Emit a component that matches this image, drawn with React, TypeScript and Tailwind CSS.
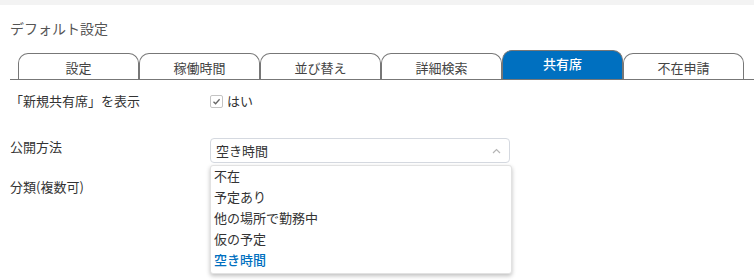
import * as React from "react";

const TABS = ["設定", "稼働時間", "並び替え", "詳細検索", "共有席", "不在申請"];
const ACTIVE = 4;
const OPTIONS = ["不在", "予定あり", "他の場所で勤務中", "仮の予定", "空き時間"];

export default function App() {
  return (
    <div className="relative h-[280px] w-[754px] overflow-hidden bg-white font-['Noto_Sans_CJK_JP','Noto_Sans',sans-serif] text-[13px] text-[#333]">
      <div className="h-[5px] bg-[#f3f3f3]" />

      <h1 className="pl-[10px] pt-[13px] text-[14px] leading-[20px] text-[#555]">
        デフォルト設定
      </h1>

      {/* tabs */}
      <div className="ml-[10px] mt-[12px] flex items-end border-b border-[#777] pl-[8px]">
        {TABS.map((t, i) =>
          i === ACTIVE ? (
            <div
              key={t}
              className="flex h-[29px] w-[121px] items-start justify-center rounded-t-[10px] border border-b-0 border-[#777] bg-[#0070c0] pt-[3px] text-[13px] font-medium leading-[20px] text-white"
            >
              {t}
            </div>
          ) : (
            <div
              key={t}
              className="flex h-[26px] w-[121px] items-start justify-center rounded-t-[10px] border border-b-0 border-[#777] bg-white pt-[4px] text-[13px] leading-[20px] text-[#444]"
            >
              {t}
            </div>
          )
        )}
      </div>

      {/* form */}
      <div className="grid grid-cols-[200px_1fr] px-[10px]">
        <div className="mt-[11px] leading-[20px]">「新規共有席」を表示</div>
        <div className="mt-[11px] flex items-center gap-[4px] leading-[20px]">
          <span className="flex h-[13px] w-[13px] items-center justify-center rounded-[2px] border border-[#c4c4c4] bg-white">
            <svg width="9" height="9" viewBox="0 0 9 9" fill="none">
              <path d="M1.5 4.8 L3.6 6.8 L7.6 2.2" stroke="#666" strokeWidth="1.3" />
            </svg>
          </span>
          <span>はい</span>
        </div>

        <div className="mt-[26px] leading-[20px]">公開方法</div>
        <div className="relative mt-[27px]">
          <div className="flex h-[25px] w-[300px] items-center justify-between rounded-[4px] border border-[#d5d9e0] bg-white pl-[5px] pr-[8px] leading-[20px]">
            <span>空き時間</span>
            <svg width="9" height="6" viewBox="0 0 9 6" fill="none">
              <path d="M1 5 L4.5 1.5 L8 5" stroke="#b5b5b5" strokeWidth="1.2" />
            </svg>
          </div>
          <ul className="absolute left-0 top-[27px] z-10 w-[302px] rounded-[3px] border border-[#e2e2e2] bg-white pb-[2px] pl-[3px] shadow-[0_2px_4px_rgba(0,0,0,0.25)]">
            {OPTIONS.map((o, i) => (
              <li
                key={o}
                className={
                  i === OPTIONS.length - 1
                    ? "h-[21px] font-medium leading-[20px] text-[#0070c0]"
                    : "h-[21px] leading-[20px] text-[#333]"
                }
              >
                {o}
              </li>
            ))}
          </ul>
        </div>

        <div className="mt-[14px] leading-[20px]">分類(複数可)</div>
        <div />
      </div>
    </div>
  );
}
